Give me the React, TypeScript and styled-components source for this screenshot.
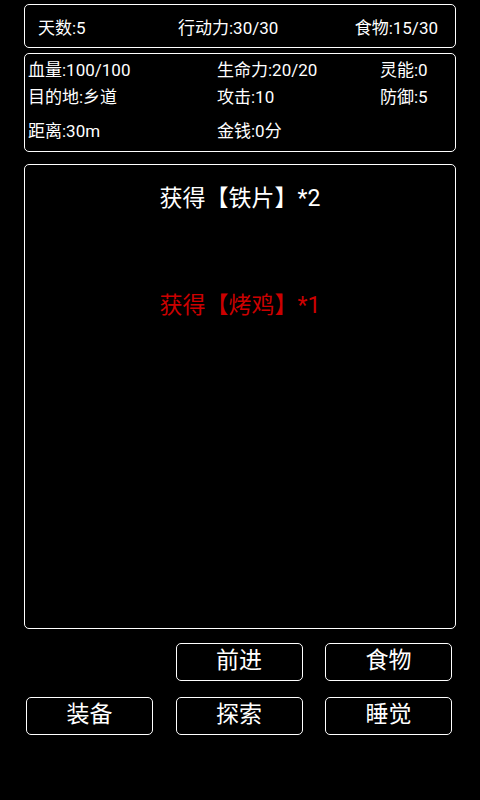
import styled, { createGlobalStyle } from 'styled-components';

const GlobalStyle = createGlobalStyle`
  html, body {
    margin: 0;
    padding: 0;
    background: #000;
  }
  body {
    font-family: Roboto, "Noto Sans CJK SC", sans-serif;
    color: #fff;
  }
`;

const stats = [
  ['血量:100/100', '生命力:20/20', '灵能:0'],
  ['目的地:乡道', '攻击:10', '防御:5'],
  ['距离:30m', '金钱:0分', ''],
];

const messages = [
  { text: '获得【铁片】*2', red: false },
  { text: '获得【烤鸡】*1', red: true },
];

const App = () => {
  return (
    <>
      <GlobalStyle />
      <Screen>
        <TopBar>
          <span>天数:5</span>
          <span>行动力:30/30</span>
          <span>食物:15/30</span>
        </TopBar>

        <StatsPanel>
          {stats.map((row, i) => (
            <StatRow key={i} $last={i === stats.length - 1}>
              {row.map((cell, j) => (
                <span key={j}>{cell}</span>
              ))}
            </StatRow>
          ))}
        </StatsPanel>

        <LogPanel>
          {messages.map((m, i) => (
            <LogLine key={i} $red={m.red}>
              {m.text}
            </LogLine>
          ))}
        </LogPanel>

        <Actions>
          <Spacer />
          <ActionButton>前进</ActionButton>
          <ActionButton>食物</ActionButton>
          <ActionButton>装备</ActionButton>
          <ActionButton>探索</ActionButton>
          <ActionButton>睡觉</ActionButton>
        </Actions>
      </Screen>
    </>
  );
};

export default App;

/* ================= STYLES ================= */

const Screen = styled.div`
  width: 480px;
  height: 800px;
  box-sizing: border-box;
  padding: 4px 24px 0;
  display: flex;
  flex-direction: column;
`;

const Panel = styled.div`
  border: 1.5px solid #fff;
  border-radius: 5px;
  box-sizing: border-box;
`;

const TopBar = styled(Panel)`
  height: 44px;
  display: grid;
  grid-template-columns: 140px 1fr auto;
  align-items: center;
  padding: 0 17px 0 13px;
  font-size: 17px;
`;

const StatsPanel = styled(Panel)`
  margin-top: 5px;
  height: 99px;
  padding: 3px 0 0 3px;
  font-size: 17px;
`;

const StatRow = styled.div<{ $last?: boolean }>`
  display: grid;
  grid-template-columns: 189px 163px 1fr;
  height: 27px;
  line-height: 27px;
  margin-top: ${(p) => (p.$last ? '7px' : '0')};
`;

const LogPanel = styled(Panel)`
  margin-top: 12px;
  height: 465px;
  display: flex;
  flex-direction: column;
  align-items: center;
  padding-top: 18px;
  gap: 75px;
`;

const LogLine = styled.div<{ $red?: boolean }>`
  font-size: 23px;
  line-height: 32px;
  color: ${(p) => (p.$red ? '#cc0000' : '#fff')};
`;

const Actions = styled.div`
  margin-top: 14px;
  padding: 0 4px 0 2px;
  display: grid;
  grid-template-columns: repeat(3, 127px);
  justify-content: space-between;
  row-gap: 16px;
`;

const Spacer = styled.div``;

const ActionButton = styled.button`
  height: 38px;
  background: #000;
  color: #fff;
  border: 1.5px solid #fff;
  border-radius: 5px;
  font-family: Roboto, "Noto Sans CJK SC", sans-serif;
  font-size: 23px;
  padding: 0 0 3px;
  line-height: 1;
  cursor: pointer;
`;
